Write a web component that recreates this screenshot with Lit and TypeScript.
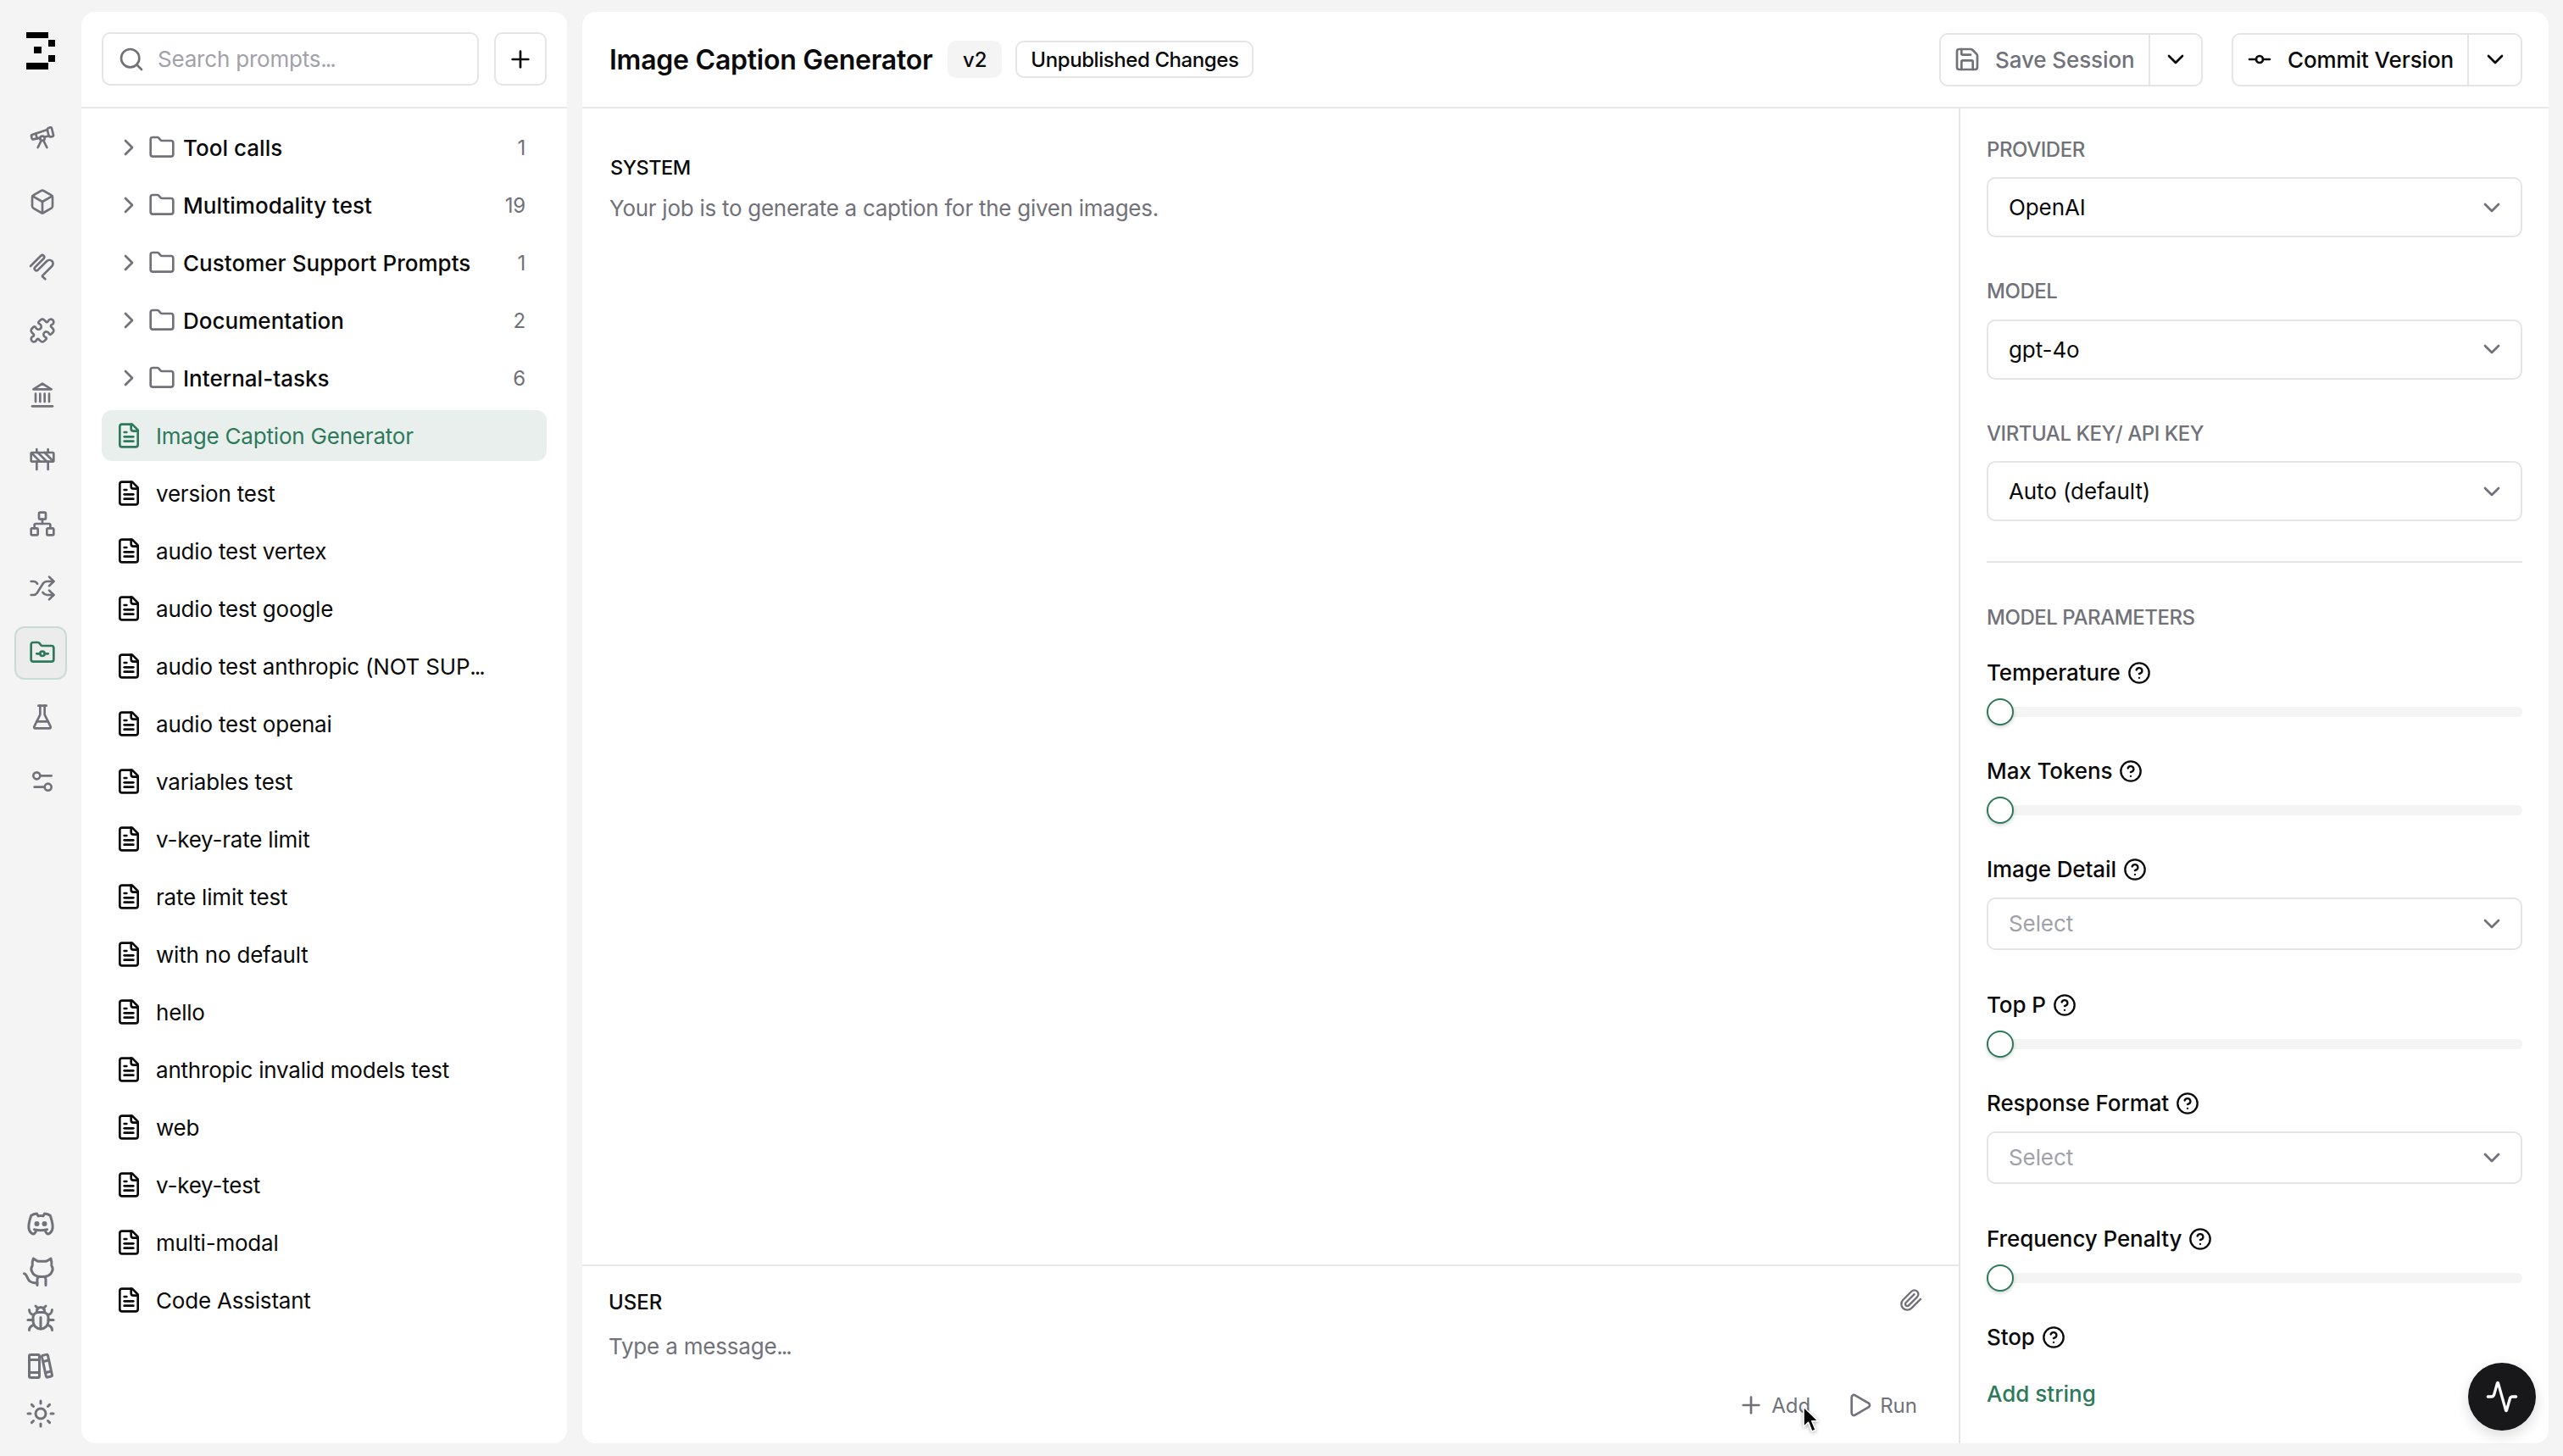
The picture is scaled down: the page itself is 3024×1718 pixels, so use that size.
import { LitElement, html, css, svg, TemplateResult } from "lit";
import { customElement } from "lit/decorators.js";

const ICONS: Record<string, TemplateResult> = {
  telescope: svg`<path d="m10.065 12.493-6.18 1.318a.934.934 0 0 1-1.108-.702l-.537-2.15a1.07 1.07 0 0 1 .691-1.265l13.504-4.44"/><path d="m13.56 11.747 4.332-.924"/><path d="m16 21-3.105-6.21"/><path d="M16.485 5.94a2 2 0 0 1 1.455-2.425l1.09-.272a1 1 0 0 1 1.212.727l1.515 6.06a1 1 0 0 1-.727 1.213l-1.09.272a2 2 0 0 1-2.425-1.455z"/><path d="m6.158 8.633 1.114 4.456"/><path d="m8 21 3.105-6.21"/><circle cx="12" cy="13" r="2"/>`,
  box: svg`<path d="M21 8a2 2 0 0 0-1-1.73l-7-4a2 2 0 0 0-2 0l-7 4A2 2 0 0 0 3 8v8a2 2 0 0 0 1 1.73l7 4a2 2 0 0 0 2 0l7-4A2 2 0 0 0 21 16Z"/><path d="m3.3 7 8.7 5 8.7-5"/><path d="M12 22V12"/>`,
  coil: svg`<path d="M1.5 12 10.7 2.8A1.77 1.77 0 0 1 13.2 5.3L5.5 13A1.77 1.77 0 0 0 8 15.5L16 7.5A3.18 3.18 0 0 1 20.5 12L12 20.5 12 21.2 14.5 23.5"/>`,
  puzzle: svg`<path d="M19.439 7.85c-.049.322.059.648.289.878l1.568 1.568c.47.47.706 1.087.706 1.704s-.235 1.233-.706 1.704l-1.611 1.611a.98.98 0 0 1-.837.276c-.47-.07-.802-.48-.968-.925a2.501 2.501 0 1 0-3.214 3.214c.446.166.855.497.925.968a.979.979 0 0 1-.276.837l-1.61 1.61a2.404 2.404 0 0 1-1.705.707 2.402 2.402 0 0 1-1.704-.706l-1.568-1.568a1.026 1.026 0 0 0-.877-.29c-.493.074-.84.504-1.02.968a2.5 2.5 0 1 1-3.237-3.237c.464-.18.894-.527.967-1.02a1.026 1.026 0 0 0-.289-.877l-1.568-1.568A2.402 2.402 0 0 1 1.998 12c0-.617.236-1.234.706-1.704L4.23 8.77c.24-.24.581-.353.917-.303.515.077.877.528 1.073 1.01a2.5 2.5 0 1 0 3.259-3.259c-.482-.196-.933-.558-1.01-1.073-.05-.336.062-.676.303-.917l1.525-1.525A2.402 2.402 0 0 1 12 1.998c.617 0 1.234.236 1.704.706l1.568 1.568c.23.23.556.338.877.29.493-.074.84-.504 1.02-.968a2.5 2.5 0 1 1 3.237 3.237c-.464.18-.894.527-.967 1.02Z"/>`,
  landmark: svg`<path d="M3 22h18"/><path d="M6 18v-7"/><path d="M10 18v-7"/><path d="M14 18v-7"/><path d="M18 18v-7"/><path d="M12 2l8 5H4z"/>`,
  construction: svg`<rect x="2" y="6" width="20" height="8" rx="1"/><path d="M17 14v7"/><path d="M7 14v7"/><path d="M17 3v3"/><path d="M7 3v3"/><path d="M10 14 2.3 6.3"/><path d="m14 6 7.7 7.7"/><path d="m8 6 8 8"/>`,
  network: svg`<rect x="16" y="16" width="6" height="6" rx="1"/><rect x="2" y="16" width="6" height="6" rx="1"/><rect x="9" y="2" width="6" height="6" rx="1"/><path d="M5 16v-3a1 1 0 0 1 1-1h12a1 1 0 0 1 1 1v3"/><path d="M12 12V8"/>`,
  shuffle: svg`<path d="m18 14 4 4-4 4"/><path d="m18 2 4 4-4 4"/><path d="M2 18h1.973a4 4 0 0 0 3.3-1.7l5.454-8.6a4 4 0 0 1 3.3-1.7H22"/><path d="M2 6h1.972a4 4 0 0 1 3.6 2.2"/><path d="M22 18h-6.041a4 4 0 0 1-3.3-1.8l-.359-.45"/>`,
  foldergit: svg`<circle cx="12" cy="13" r="2"/><path d="M20 20a2 2 0 0 0 2-2V8a2 2 0 0 0-2-2h-7.9a2 2 0 0 1-1.69-.9L9.6 3.9A2 2 0 0 0 7.93 3H4a2 2 0 0 0-2 2v13a2 2 0 0 0 2 2Z"/><path d="M14 13h3"/><path d="M7 13h3"/>`,
  flask: svg`<path d="M10 2v7.527a2 2 0 0 1-.211.896L4.72 20.55a1 1 0 0 0 .9 1.45h12.76a1 1 0 0 0 .9-1.45l-5.069-10.127A2 2 0 0 1 14 9.527V2"/><path d="M8.5 2h7"/><path d="M7 16h10"/>`,
  settings: svg`<path d="M20 7h-9"/><path d="M14 17H5"/><circle cx="17" cy="17" r="3"/><circle cx="7" cy="7" r="3"/>`,
  discord: svg`<path d="M8 12a1 1 0 1 0 2 0a1 1 0 0 0-2 0"/><path d="M14 12a1 1 0 1 0 2 0a1 1 0 0 0-2 0"/><path d="M15.5 17c0 1 1.5 3 2 3c1.5 0 2.833-1.667 3.5-3c.667-1.667.5-5.833-1.5-11.5c-1.457-1.015-3-1.34-4.5-1.5l-.972 1.923a11.913 11.913 0 0 0-4.053 0l-.975-1.923c-1.5.16-3.043.485-4.5 1.5c-2 5.667-2.167 9.833-1.5 11.5c.667 1.333 2 3 3.5 3c.5 0 2-2 2-3"/><path d="M7 16.5c3.5 1 6.5 1 10 0"/>`,
  github: svg`<path d="M6.2 2C8 3 9 4 10 4.2H16C17 4 18.5 3 20 2C20.6 4 20.8 6 20.5 7.5C21.5 9 21.5 11 21 12C20 15 17 16.4 13 16.4C9 16.4 6 15 5 12C4.3 10.5 4.5 9 5.5 7.5C5.2 6 5.4 4 6.2 2Z"/><path d="M9.3 23V18.5C9.3 17.5 10 16.6 11 16.4"/><path d="M16 23V18.5C16 17.5 15.5 16.6 14.7 16.4"/><path d="M-1 13.8C1 14 1.5 18 3 19.5C4.5 21 7 21.3 9.3 21.3"/>`,
  bug: svg`<path d="m8 2 1.88 1.88"/><path d="M14.12 3.88 16 2"/><path d="M9 7.13v-1a3.003 3.003 0 1 1 6 0v1"/><path d="M12 20c-3.3 0-6-2.7-6-6v-3a4 4 0 0 1 4-4h4a4 4 0 0 1 4 4v3c0 3.3-2.7 6-6 6"/><path d="M12 20v-9"/><path d="M6.53 9C4.6 8.8 3 7.1 3 5"/><path d="M6 13H2"/><path d="M3 21c0-2.1 1.7-3.9 3.8-4"/><path d="M20.97 5c0 2.1-1.6 3.8-3.5 4"/><path d="M22 13h-4"/><path d="M17.2 17c2.1.1 3.8 1.9 3.8 4"/>`,
  books: svg`<rect x="3" y="3" width="8" height="18" rx="1.2"/><path d="M3 7h8"/><path d="M3 17h8"/><path d="M13.6 3.6l2.8-.7c.6-.15 1.1.2 1.25.7l3.3 15.2c.1.55-.2 1.05-.75 1.2l-2.7.7c-.55.15-1.1-.2-1.25-.75L13 4.8c-.1-.55.1-1.05.6-1.2z"/><path d="M14.2 8.3l4-1"/><path d="M16.3 17l4-1"/>`,
  sun: svg`<circle cx="12" cy="12" r="4"/><path d="M12 2v2"/><path d="M12 20v2"/><path d="m4.93 4.93 1.41 1.41"/><path d="m17.66 17.66 1.41 1.41"/><path d="M2 12h2"/><path d="M20 12h2"/><path d="m6.34 17.66-1.41 1.41"/><path d="m19.07 4.93-1.41 1.41"/>`,
  search: svg`<path d="m21 21-4.34-4.34"/><circle cx="11" cy="11" r="8"/>`,
  plus: svg`<path d="M5 12h14"/><path d="M12 5v14"/>`,
  chevronR: svg`<path d="m9 18 6-6-6-6"/>`,
  chevronD: svg`<path d="m6 9 6 6 6-6"/>`,
  folder: svg`<path d="M20 20a2 2 0 0 0 2-2V8a2 2 0 0 0-2-2h-7.9a2 2 0 0 1-1.69-.9L9.6 3.9A2 2 0 0 0 7.93 3H4a2 2 0 0 0-2 2v13a2 2 0 0 0 2 2Z"/>`,
  file: svg`<path d="M15 2H6a2 2 0 0 0-2 2v16a2 2 0 0 0 2 2h12a2 2 0 0 0 2-2V7Z"/><path d="M14 2v4a2 2 0 0 0 2 2h4"/><path d="M10 9H8"/><path d="M16 13H8"/><path d="M16 17H8"/>`,
  save: svg`<path d="M15.2 3a2 2 0 0 1 1.4.6l3.8 3.8a2 2 0 0 1 .6 1.4V19a2 2 0 0 1-2 2H5a2 2 0 0 1-2-2V5a2 2 0 0 1 2-2z"/><path d="M17 21v-7a1 1 0 0 0-1-1H8a1 1 0 0 0-1 1v7"/><path d="M7 3v4a1 1 0 0 0 1 1h7"/>`,
  commit: svg`<circle cx="12" cy="12" r="3"/><path d="M3 12h6"/><path d="M15 12h6"/>`,
  help: svg`<circle cx="12" cy="12" r="10"/><path d="M9.09 9a3 3 0 0 1 5.83 1c0 2-3 3-3 3"/><path d="M12 17h.01"/>`,
  clip: svg`<path d="m21.44 11.05-9.19 9.19a6 6 0 0 1-8.49-8.49l8.57-8.57A4 4 0 1 1 18 8.84l-8.59 8.57a2 2 0 0 1-2.83-2.83l8.49-8.48"/>`,
  play: svg`<path d="M5 5a2 2 0 0 1 3.008-1.728l11.997 6.998a2 2 0 0 1 .003 3.458l-12 7A2 2 0 0 1 5 19z"/>`,
  activity: svg`<path d="M22 12h-2.48a2 2 0 0 0-1.93 1.46l-2.35 8.36a.25.25 0 0 1-.48 0L9.24 2.18a.25.25 0 0 0-.48 0l-2.35 8.36A2 2 0 0 1 4.49 12H2"/>`,
};

const ic = (name: string, cls = "s32") =>
  html`<svg class="ic ${cls}" viewBox="0 0 24 24" aria-hidden="true">${ICONS[name]}</svg>`;

const dots = html`<span class="ell">...</span>`;

const NAV_TOP = ["telescope", "box", "coil", "puzzle", "landmark", "construction", "network", "shuffle", "foldergit", "flask", "settings"];
const NAV_BOTTOM = ["discord", "github", "bug", "books", "sun"];
const FOLDERS: [string, number][] = [
  ["Tool calls", 1],
  ["Multimodality test", 19],
  ["Customer Support Prompts", 1],
  ["Documentation", 2],
  ["Internal-tasks", 6],
];
const FILES: (string | TemplateResult)[] = [
  "Image Caption Generator", "version test", "audio test vertex", "audio test google",
  html`audio test anthropic (NOT SUP${dots}`, "audio test openai", "variables test", "v-key-rate limit",
  "rate limit test", "with no default", "hello", "anthropic invalid models test", "web",
  "v-key-test", "multi-modal", "Code Assistant",
];

@customElement("app-root")
export class AppRoot extends LitElement {
  static styles = css`
    :host { display: block; width: 3024px; height: 1718px; background: #f4f4f4; font-family: Inter, "Liberation Sans", sans-serif; color: #0a0a0b; position: relative; overflow: hidden; }
    * { box-sizing: border-box; }
    .ic { fill: none; stroke: currentColor; stroke-width: 2; stroke-linecap: round; stroke-linejoin: round; flex: none; display: block; overflow: visible; }
    .s28 { width: 28px; height: 28px; }
    .s32 { width: 32px; height: 32px; }
    .s36 { width: 36px; height: 36px; }
    .s40 { width: 40px; height: 40px; }
    .ell { letter-spacing: -2px; }
    .app { display: flex; height: 1718px; }

    .rail { width: 96px; flex: none; display: flex; flex-direction: column; padding: 38px 0 22px 17px; color: #71717a; }
    .logo { width: 34px; height: 44px; margin: 0 0 42px 14px; display: block; fill: #000; }
    .nav-item { width: 62px; height: 63px; margin: 6.5px 0; display: flex; align-items: center; justify-content: center; padding-left: 4px; border: 2px solid transparent; border-radius: 12px; }
    .nav-item.active { background: #ececec; border-color: #c9dcd3; color: #2d7a5b; }
    .rail-bottom { margin-top: auto; display: flex; flex-direction: column; }
    .rail-bottom div { width: 62px; height: 56px; display: flex; align-items: center; justify-content: center; }

    .card { background: #fff; margin: 14px 0 15px; border-radius: 16px; overflow: hidden; }
    .sidebar { width: 573px; flex: none; margin-right: 18px; display: flex; flex-direction: column; }
    .side-head { height: 114px; flex: none; border-bottom: 2px solid #e8e8e8; padding: 24px 24px 0; display: flex; gap: 18px; }
    .search { flex: 1; height: 63px; border: 2px solid #e5e5e5; border-radius: 10px; display: flex; align-items: center; padding-left: 17px; gap: 15px; color: #71717a; }
    .search span.ph { font-size: 26px; color: #a1a1aa; letter-spacing: -0.2px; }
    .add-btn { width: 62px; height: 63px; border: 2px solid #e5e5e5; border-radius: 10px; display: flex; align-items: center; justify-content: center; color: #0a0a0b; }
    .list { padding: 16px 24px 0; display: flex; flex-direction: column; gap: 8px; }
    .row { height: 60px; flex: none; display: flex; align-items: center; padding-left: 16px; padding-right: 25px; border-radius: 12px; font-size: 26px; letter-spacing: -0.2px; white-space: nowrap; }
    .row .name { flex: 1; }
    .row.folder .name { font-weight: 500; letter-spacing: 0.03px; }
    .chev { color: #71717a; margin-right: 7px; }
    .fold { color: #71717a; margin-right: 9px; }
    .doc { margin-right: 16px; }
    .count { color: #71717a; font-size: 24px; }
    .row.sel { background: #e9efec; color: #2d7a5b; }

    .main { flex: 1; margin-right: 17px; display: flex; flex-direction: column; }
    .top { height: 114px; flex: none; border-bottom: 2px solid #e8e8e8; display: flex; align-items: center; padding: 0 31px 0 32px; }
    h1 { margin: 0 18px 0 0; font-size: 32px; font-weight: 600; letter-spacing: -0.25px; white-space: nowrap; }
    .badge { height: 44px; display: flex; align-items: center; border-radius: 10px; font-size: 24px; font-weight: 500; white-space: nowrap; }
    .badge.v { background: #f4f4f4; width: 64px; justify-content: center; margin-right: 16px; }
    .badge.u { border: 2px solid #e5e5e5; padding: 0 16px; letter-spacing: -0.42px; }
    .spacer { flex: 1; }
    .split { height: 63px; display: flex; border: 2px solid #e5e5e5; border-radius: 10px; align-items: stretch; font-size: 26px; font-weight: 500; letter-spacing: -0.1px; white-space: nowrap; }
    .split .lead { display: flex; align-items: center; gap: 17px; padding: 0 15px; border-right: 2px solid #e5e5e5; }
    .split .caret { display: flex; align-items: center; justify-content: center; flex: 1; }
    .split.save { width: 311px; margin-right: 34px; }
    .split.save .lead { width: 247px; color: #71717a; }
    .split.commit { width: 343px; }
    .split.commit .lead { width: 278px; }

    .body { flex: 1; display: flex; min-height: 0; }
    .editor { flex: 1; display: flex; flex-direction: column; min-width: 0; }
    .system { flex: 1; padding: 54px 32px 0 33px; }
    .role { font-size: 24px; font-weight: 500; line-height: 32px; }
    .role.sys { font-size: 23.5px; letter-spacing: -0.5px; }
    .sys-text { margin-top: 14px; font-size: 26px; line-height: 36px; color: #71717a; letter-spacing: -0.27px; margin-left: -1px; }
    .user { height: 211px; flex: none; border-top: 2px solid #e8e8e8; padding: 27px 42px 0 31px; }
    .user-head { display: flex; align-items: center; justify-content: space-between; }
    .clip { color: #71717a; margin-top: -6px; }
    .msg { margin-top: 18px; font-size: 26px; line-height: 36px; color: #71717a; letter-spacing: -0.2px; }
    .actions { margin: 31px 7px 0 0; height: 40px; display: flex; justify-content: flex-end; align-items: center; gap: 42px; color: #71717a; font-size: 24px; font-weight: 400; }
    .actions div { display: flex; align-items: center; gap: 8px; }

    .panel { width: 696px; flex: none; border-left: 2px solid #e5e5e5; padding: 31px 31px 0 31px; overflow: hidden; }
    .lbl { height: 34px; display: flex; align-items: center; font-size: 24px; font-weight: 500; color: #71717a; white-space: nowrap; letter-spacing: -0.45px; }
    .sel-box { height: 71px; margin: 16px 0 46.5px; border: 2px solid #e5e5e5; border-radius: 10px; display: flex; align-items: center; justify-content: space-between; padding: 0 18px 0 24px; font-size: 26px; font-weight: 400; color: #71717a; letter-spacing: -0.1px; }
    .sel-box span { color: #0a0a0b; }
    .sel-box.small { height: 62px; margin: 15px 0 47px; }
    .sel-box.small span { color: #a1a1aa; }
    .rule { height: 2px; background: #e5e5e5; margin: 2px 0 48px; }
    .mp { margin-bottom: 30px; }
    .plbl { height: 36px; display: flex; align-items: center; gap: 8px; font-size: 26px; font-weight: 450; letter-spacing: -0.1px; white-space: nowrap; }
    .slider { height: 32px; margin: 12px 0 36px; position: relative; display: flex; align-items: center; }
    .track { flex: 1; height: 12px; background: #f4f4f4; border-radius: 6px; }
    .thumb { position: absolute; left: 0; top: 0; width: 32px; height: 32px; border-radius: 50%; background: #fff; border: 2px solid #2d7a5b; box-shadow: 0 2px 4px rgba(0,0,0,.18); }
    .add-str { margin-top: 31px; height: 36px; display: flex; align-items: center; color: #2d7a5b; font-size: 26px; font-weight: 500; }

    .fab { position: absolute; left: 2912px; top: 1608px; width: 80px; height: 80px; border-radius: 50%; background: #18181b; color: #fff; display: flex; align-items: center; justify-content: center; box-shadow: 0 6px 16px rgba(0,0,0,.14); }
    .cursor { position: absolute; left: 2128px; top: 1660px; width: 22px; height: 34px; overflow: visible; filter: drop-shadow(0 1px 2px rgba(0,0,0,.35)); }
  `;

  private slider() {
    return html`<div class="slider"><div class="track"></div><div class="thumb"></div></div>`;
  }
  private plabel(t: string) {
    return html`<div class="plbl">${t}${ic("help", "s28")}</div>`;
  }
  private select(v: string, small = false) {
    return html`<div class="sel-box ${small ? "small" : ""}"><span>${v}</span>${ic("chevronD", "s32")}</div>`;
  }

  render() {
    return html`
      <div class="app">
        <nav class="rail">
          <svg class="logo" viewBox="0 0 34 44"><rect x="0" y="0" width="26" height="7"/><rect x="26" y="9" width="8" height="8"/><rect x="9" y="17" width="9" height="8"/><rect x="26" y="27" width="8" height="8"/><rect x="0" y="36" width="26" height="8"/></svg>
          ${NAV_TOP.map((n) => html`<div class="nav-item ${n === "foldergit" ? "active" : ""}">${ic(n)}</div>`)}
          <div class="rail-bottom">${NAV_BOTTOM.map((n) => html`<div>${ic(n, "s36")}</div>`)}</div>
        </nav>

        <aside class="card sidebar">
          <div class="side-head">
            <div class="search">${ic("search")}<span class="ph">Search prompts${dots}</span></div>
            <div class="add-btn">${ic("plus")}</div>
          </div>
          <div class="list">
            ${FOLDERS.map(([n, c]) => html`<div class="row folder">
              <span class="chev">${ic("chevronR")}</span><span class="fold">${ic("folder")}</span>
              <span class="name">${n}</span><span class="count">${c}</span></div>`)}
            ${FILES.map((n, i) => html`<div class="row ${i === 0 ? "sel" : ""}">
              <span class="doc">${ic("file")}</span><span>${n}</span></div>`)}
          </div>
        </aside>

        <main class="card main">
          <header class="top">
            <h1>Image Caption Generator</h1>
            <div class="badge v">v2</div>
            <div class="badge u">Unpublished Changes</div>
            <div class="spacer"></div>
            <div class="split save"><div class="lead">${ic("save")}Save Session</div><div class="caret">${ic("chevronD", "s32")}</div></div>
            <div class="split commit"><div class="lead">${ic("commit")}Commit Version</div><div class="caret">${ic("chevronD", "s32")}</div></div>
          </header>
          <div class="body">
            <section class="editor">
              <div class="system">
                <div class="role sys">SYSTEM</div>
                <div class="sys-text">Your job is to generate a caption for the given images.</div>
              </div>
              <div class="user">
                <div class="user-head"><div class="role">USER</div><span class="clip">${ic("clip", "s28")}</span></div>
                <div class="msg">Type a message${dots}</div>
                <div class="actions">
                  <div>${ic("plus")}Add</div>
                  <div>${ic("play")}Run</div>
                </div>
              </div>
            </section>
            <section class="panel">
              <div class="lbl">PROVIDER</div>${this.select("OpenAI")}
              <div class="lbl">MODEL</div>${this.select("gpt-4o")}
              <div class="lbl">VIRTUAL KEY/ API KEY</div>${this.select("Auto (default)")}
              <div class="rule"></div>
              <div class="lbl mp">MODEL PARAMETERS</div>
              ${this.plabel("Temperature")}${this.slider()}
              ${this.plabel("Max Tokens")}${this.slider()}
              ${this.plabel("Image Detail")}${this.select("Select", true)}
              ${this.plabel("Top P")}${this.slider()}
              ${this.plabel("Response Format")}${this.select("Select", true)}
              ${this.plabel("Frequency Penalty")}${this.slider()}
              ${this.plabel("Stop")}
              <div class="add-str">Add string</div>
            </section>
          </div>
        </main>
      </div>
      <div class="fab">${ic("activity", "s40")}</div>
      <svg class="cursor" viewBox="0 0 22 34"><path d="M0 0V23.5L5.6 18.3L9.8 29L14.2 27.2L9.8 16.8H17.2Z" fill="#000" stroke="#fff" stroke-width="1.6" stroke-linejoin="round"/></svg>
    `;
  }
}
